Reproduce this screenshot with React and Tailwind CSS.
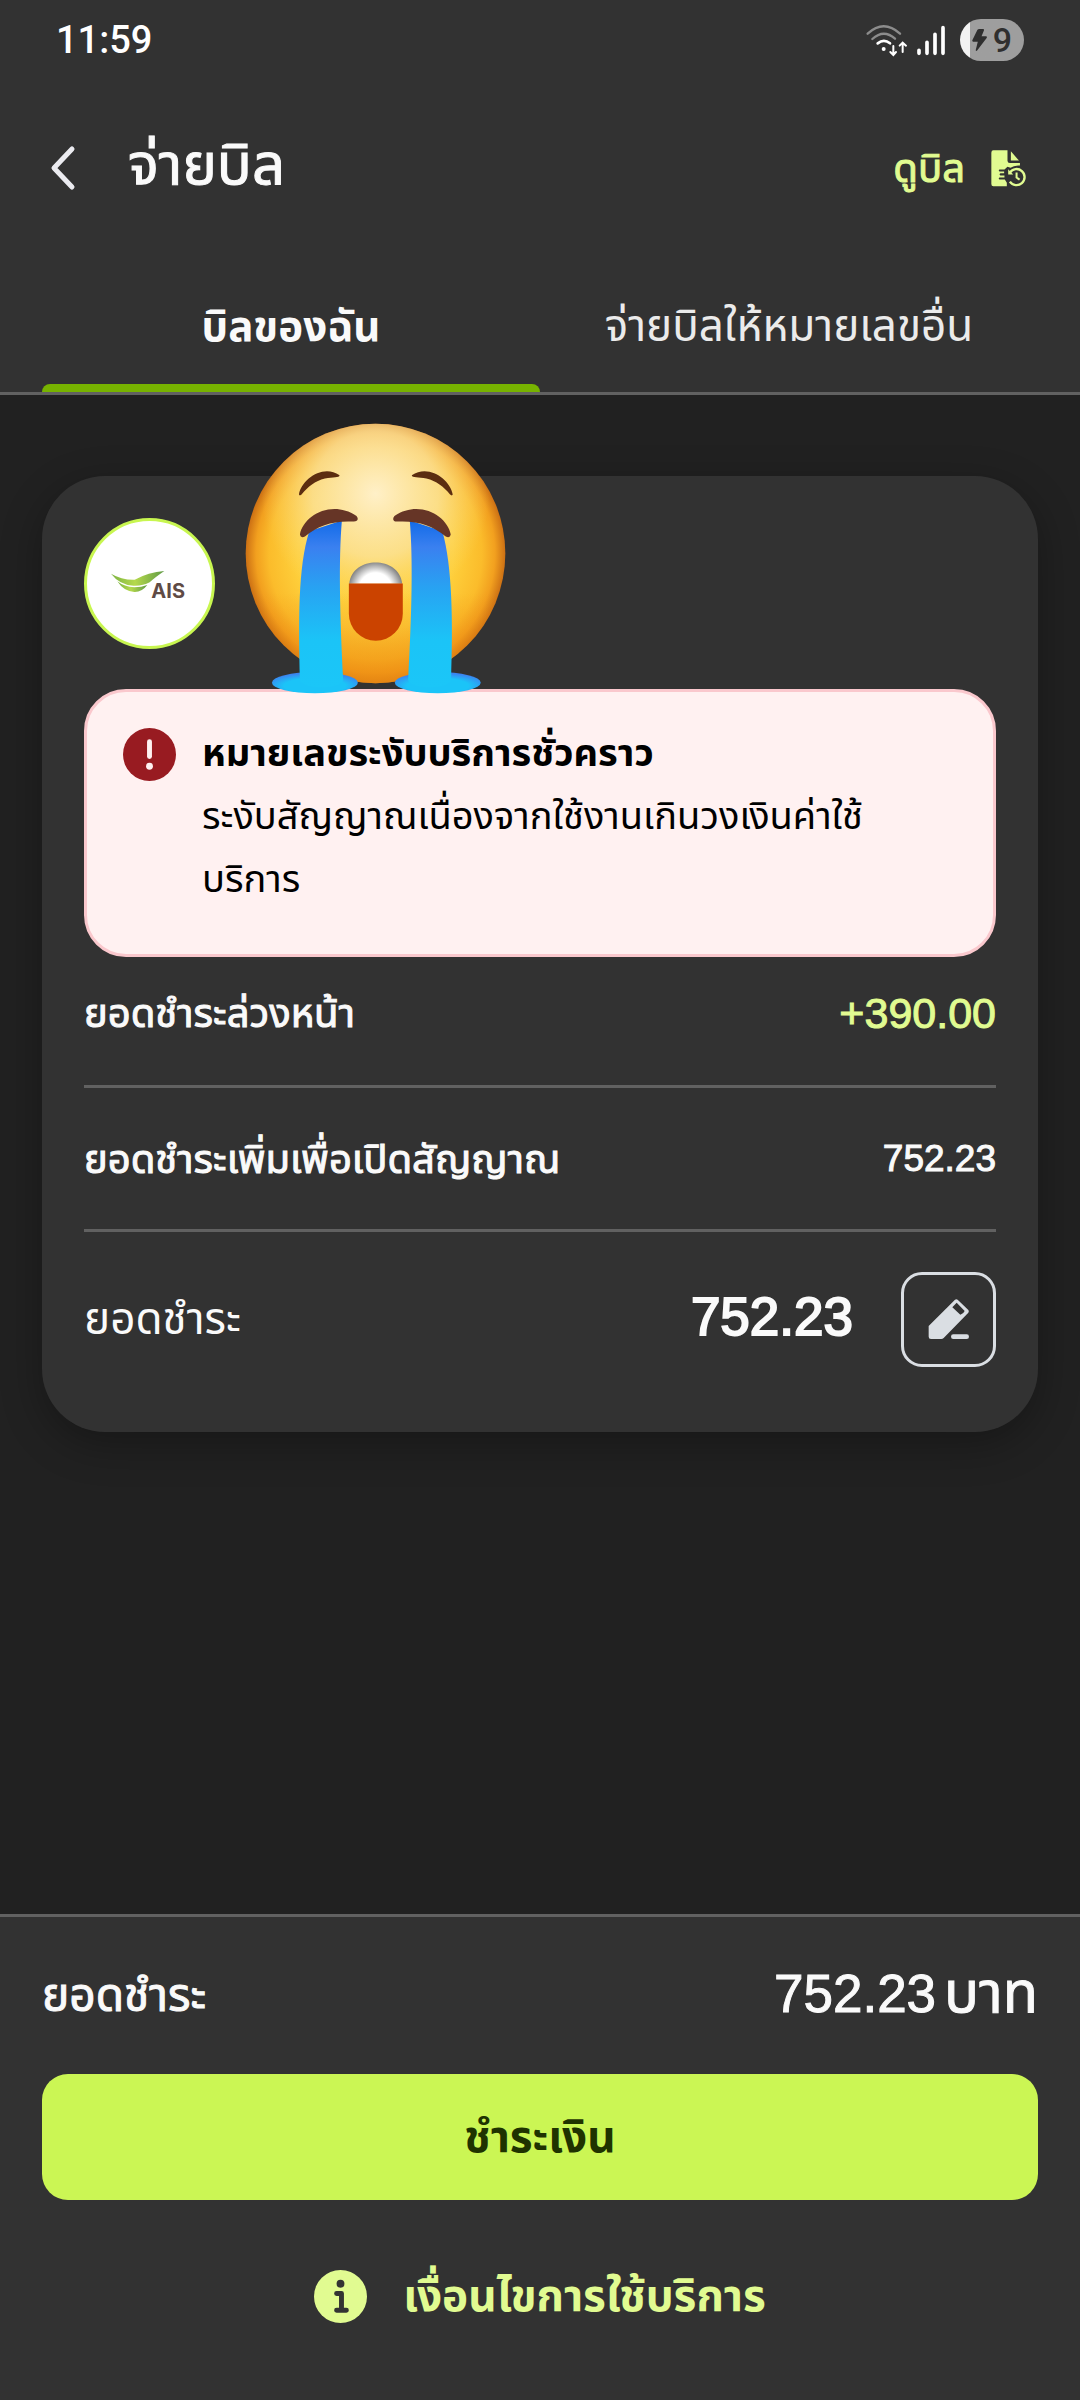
import React, { useState } from 'react';

const TABS = [
  { id: 'mine', label: 'บิลของฉัน' },
  { id: 'other', label: 'จ่ายบิลให้หมายเลขอื่น' },
];

function SignalIcons() {
  return (
    <svg viewBox="78 60 240 120" className="w-20 h-10" fill="none" strokeLinecap="round" aria-hidden="true">
      <g stroke="#8c8c8c" strokeWidth="7">
        <path d="M83 101 Q131 57 180 101" />
        <path d="M97 117 Q131 86 165 116" />
      </g>
      <g stroke="#fff" strokeWidth="8">
        <path d="M113 130 Q132 115 150 130" />
        <path d="M160 138 V163 M151 156 L160 165 L168 156" strokeWidth="6" />
        <path d="M188 156 V129 M179 137 L188 128 L198 137" strokeWidth="6" />
      </g>
      <circle cx="131" cy="147" r="6" fill="#fff" />
      <g stroke="#fff" strokeWidth="11">
        <path d="M237 151 V160 M261 127 V160 M285 103 V160 M309 83 V160" />
      </g>
    </svg>
  );
}

function Battery({ level }) {
  return (
    <div className="flex items-center justify-end gap-1.5 w-16 h-[42px] pr-3 rounded-full bg-linear-to-r from-[#f2f2f2] from-15% to-[#9e9e9e] to-15% text-[#2f2f2f]">
      <svg viewBox="392 88 44 68" className="w-[15px] h-6" fill="currentColor" aria-hidden="true">
        <path d="M408 92 Q410 90 413 90 H425 Q428 91 427 94 L420 111 H434 Q437 113 435 116 L407 153 Q403 156 403 151 L409 127 H395 Q392 126 393 123 Z" />
      </svg>
      <span className="font-[Roboto] font-medium text-[34px] leading-[42px]">{level}</span>
    </div>
  );
}

function StatusBar() {
  return (
    <div className="flex items-center justify-between h-20 px-14">
      <span className="font-[Roboto] font-medium text-[38px] leading-10 text-white">11:59</span>
      <div className="flex items-center gap-3.5">
        <SignalIcons />
        <Battery level={9} />
      </div>
    </div>
  );
}

function BillHistoryIcon() {
  return (
    <svg viewBox="456 449 104 110" className="w-[35px] h-[37px]" aria-hidden="true">
      <path d="M463 450 H505 V481 Q505 488 512 488 H542 V495 Q525 494 514 502 L505 499 L496 507 H481 Q477 509 481 513 H495 V518 H484 Q479 520 484 525 H496 V531 H481 Q477 534 481 537 H497 L503 546 V557 H463 Q457 557 457 550 V457 Q457 450 463 450 Z" fill="#e1fb91" />
      <path d="M515 453 L539 480 H515 Z" fill="#e1fb91" />
      <path d="M512 516 A24 24 0 1 1 512 543" fill="none" stroke="#e1fb91" strokeWidth="7" />
      <path d="M507 506 V522 H522 Z" fill="#e1fb91" />
      <path d="M532 516 V531 L541 537" fill="none" stroke="#e1fb91" strokeWidth="6" />
    </svg>
  );
}

function AisLogo() {
  return (
    <div className="flex items-center justify-center w-[131px] h-[131px] rounded-full border-[3px] border-[#c8f650] bg-white">
      <svg viewBox="215 475 240 150" className="w-20 h-[50px]" role="img" aria-label="AIS">
        <defs>
          <linearGradient id="leaf" x1="0" y1="0" x2="1" y2="0">
            <stop offset="0" stopColor="#7cb342" />
            <stop offset="0.45" stopColor="#b5d94c" />
            <stop offset="1" stopColor="#5f9a45" />
          </linearGradient>
        </defs>
        <path d="M218 519 Q250 538 289 537 Q330 515 378 511 Q350 530 334 545 Q314 556 286 555 Q244 553 218 519 Z" fill="url(#leaf)" />
        <path d="M237 542 Q258 559 288 560 Q310 560 327 553 Q310 575 288 574 Q256 572 237 542 Z" fill="url(#leaf)" />
        <text x="339" y="591" fontFamily="Inter, sans-serif" fontWeight="700" fontSize="60" fill="#5f4b45">AIS</text>
      </svg>
    </div>
  );
}

function CryingFace() {
  return (
    <svg viewBox="612 64 790 820" className="absolute left-[202px] -top-[54px] w-[263px] h-[273px]" role="img" aria-label="ร้องไห้">
      <defs>
        <radialGradient id="face" cx="0.5" cy="0.5" r="0.5">
          <stop offset="0" stopColor="#ffd540" />
          <stop offset="0.6" stopColor="#fed03c" />
          <stop offset="0.82" stopColor="#fbbc2b" />
          <stop offset="0.92" stopColor="#f2a01f" />
          <stop offset="1" stopColor="#cc7014" />
        </radialGradient>
        <radialGradient id="shine" cx="0.5" cy="0.27" r="0.44">
          <stop offset="0" stopColor="#fff0c8" />
          <stop offset="0.55" stopColor="#fbe3a0" stopOpacity="0.75" />
          <stop offset="1" stopColor="#fbd870" stopOpacity="0" />
        </radialGradient>
        <linearGradient id="chin" x1="0" y1="0" x2="0" y2="1">
          <stop offset="0.65" stopColor="#f09010" stopOpacity="0" />
          <stop offset="1" stopColor="#ee8d12" stopOpacity="0.75" />
        </linearGradient>
        <linearGradient id="tear" x1="0" y1="0" x2="0" y2="1">
          <stop offset="0" stopColor="#126be8" />
          <stop offset="0.16" stopColor="#3a80f0" />
          <stop offset="0.4" stopColor="#28a2f2" />
          <stop offset="0.72" stopColor="#1bc4f7" />
          <stop offset="1" stopColor="#1bc6f8" />
        </linearGradient>
        <radialGradient id="puddle" cx="0.5" cy="0.65" r="0.6">
          <stop offset="0.6" stopColor="#1bc4f8" />
          <stop offset="1" stopColor="#3b84f0" />
        </radialGradient>
        <radialGradient id="teeth" gradientUnits="userSpaceOnUse" cx="1007" cy="566" r="82">
          <stop offset="0.6" stopColor="#fff" />
          <stop offset="1" stopColor="#858585" />
        </radialGradient>
      </defs>
      <circle cx="1007" cy="459" r="390" fill="url(#face)" />
      <circle cx="1007" cy="459" r="390" fill="url(#shine)" />
      <circle cx="1007" cy="459" r="390" fill="url(#chin)" />
      <g fill="#5c2d10">
        <path d="M777 282 C785 235 850 190 899 224 C898 233 880 228 855 234 C825 242 805 258 785 282 Q779 287 777 282 Z" />
        <path d="M1239 282 C1231 235 1166 190 1116 224 C1117 233 1136 228 1160 234 C1190 242 1211 258 1231 282 Q1237 287 1239 282 Z" />
      </g>
      <path d="M928 550 C936 465 1079 465 1087 550 Z" fill="url(#teeth)" />
      <path d="M927 549 H1089 V640 A81 81 0 0 1 927 640 Z" fill="#cb4300" />
      <ellipse cx="825" cy="847" rx="129" ry="32" fill="url(#puddle)" />
      <ellipse cx="1194" cy="847" rx="129" ry="32" fill="url(#puddle)" />
      <path d="M808 392 L906 360 C896 480 900 640 910 840 C900 868 790 868 780 840 C776 660 774 500 808 392 Z" fill="url(#tear)" />
      <path d="M1208 392 L1110 360 C1120 480 1116 640 1105 840 C1116 868 1224 868 1234 840 C1240 660 1238 500 1208 392 Z" fill="url(#tear)" />
      <g fill="#663526">
        <path d="M780 402 C790 345 875 296 950 346 C958 356 952 364 940 363 C880 360 835 374 795 408 Q782 414 780 402 Z" />
        <path d="M1233 402 C1223 345 1138 296 1064 346 C1056 356 1061 364 1073 363 C1133 360 1178 374 1218 408 Q1231 414 1233 402 Z" />
      </g>
    </svg>
  );
}

function AlertIcon() {
  return (
    <svg viewBox="0 0 54 54" className="mt-1.5 w-[53px] h-[53px] shrink-0" aria-hidden="true">
      <circle cx="27" cy="27" r="27" fill="#981b21" />
      <path d="M27 14 V29" stroke="#fff1f1" strokeWidth="5" strokeLinecap="round" />
      <circle cx="27" cy="39" r="3.5" fill="#fff1f1" />
    </svg>
  );
}

function EditIcon() {
  return (
    <svg viewBox="864 648 126 126" className="w-[42px] h-[42px]" aria-hidden="true">
      <path d="M866 732 L945 653 Q949 650 953 653 L985 684 Q988 688 985 692 L911 768 Q908 771 904 771 H873 Q866 771 866 764 Z M937 676 L961 698 Q971 695 974 687 L950 662 Z" fill="#dadee3" fillRule="evenodd" />
      <path d="M940 764 H980" stroke="#dadee3" strokeWidth="14" strokeLinecap="round" />
    </svg>
  );
}

function InfoIcon() {
  return (
    <svg viewBox="0 0 54 54" className="w-[53px] h-[53px]" aria-hidden="true">
      <circle cx="27" cy="27" r="27" fill="#e1fb91" />
      <circle cx="27" cy="14" r="4" fill="#333" />
      <path d="M23 24 H28 V41 M23 41 H33" fill="none" stroke="#333" strokeWidth="5" strokeLinecap="round" strokeLinejoin="round" />
    </svg>
  );
}

export default function App() {
  const [tab, setTab] = useState('mine');

  return (
    <div className="min-h-screen flex flex-col bg-[#212121] text-[#fafafa] font-['Liberation_Sans','Noto_Sans_Thai',sans-serif]">
      <header className="bg-[#323232] border-b-[3px] border-[#616161]">
        <StatusBar />
        <div className="flex items-center h-44 pl-12 pr-[54px]">
          <button aria-label="ย้อนกลับ" className="w-8 h-12">
            <svg viewBox="0 0 32 48" className="w-8 h-12" fill="none" stroke="#ebebf0" strokeWidth="5" strokeLinecap="round" strokeLinejoin="round">
              <path d="M24 5 L6 24 L24 43" />
            </svg>
          </button>
          <h1 className="ml-12 pb-2 text-[58px] leading-[72px] [-webkit-text-stroke:1px_currentColor]">จ่ายบิล</h1>
          <button className="ml-auto flex items-center gap-[26px] text-[40px] leading-[60px] text-[#e1fb91] [-webkit-text-stroke:1px_currentColor]">
            ดูบิล
            <BillHistoryIcon />
          </button>
        </div>

        {/* Tabs */}
        <div role="tablist" className="grid grid-cols-2 px-[42px]">
          {TABS.map((t) => (
            <div key={t.id} role="presentation" className="flex flex-col">
              <button
                role="tab"
                aria-selected={tab === t.id}
                onClick={() => setTab(t.id)}
                className={`h-32 pt-3 ${tab === t.id ? 'text-[42px] font-bold' : 'text-[44px] text-[#ebebeb]'}`}
              >
                {t.label}
              </button>
              <div className={`h-2 rounded-t-lg ${tab === t.id ? 'bg-[#77b300]' : 'bg-transparent'}`} />
            </div>
          ))}
        </div>
      </header>

      <main className="flex-1 px-[42px] pt-[81px] pb-12">
        <section className="relative rounded-[63px] bg-[#323232] p-[42px] pb-[26px] shadow-[0_12px_42px_rgba(0,0,0,0.3)]">
          <AisLogo />
          <div className="mt-10 flex gap-[26px] rounded-[42px] border-[3px] border-[#fac8cd] bg-[#fff1f1] pt-[30px] pb-[43px] pl-9 pr-24 text-[38px] leading-[63px] text-black">
            <AlertIcon />
            <div>
              <h2 className="font-bold">หมายเลขระงับบริการชั่วคราว</h2>
              <p>ระงับสัญญาณเนื่องจากใช้งานเกินวงเงินค่าใช้บริการ</p>
            </div>
          </div>
          <CryingFace />

          <dl className="text-[40px]">
            <div className="flex items-center justify-between h-[131px] pb-4 border-b-[3px] border-[#616161] [-webkit-text-stroke:1px_currentColor]">
              <dt>ยอดชำระล่วงหน้า</dt>
              <dd className="text-[43px] text-[#e1fb91]">+390.00</dd>
            </div>
            <div className="flex items-center justify-between h-36 border-b-[3px] border-[#616161] [-webkit-text-stroke:1px_currentColor]">
              <dt>ยอดชำระเพิ่มเพื่อเปิดสัญญาณ</dt>
              <dd className="text-[37px]">752.23</dd>
            </div>
            <div className="flex items-center h-[174px]">
              <dt className="text-[44px]">ยอดชำระ</dt>
              <dd className="ml-auto pb-1 text-[53px] [-webkit-text-stroke:2px_currentColor]">752.23</dd>
              <dd className="ml-12">
                <button aria-label="แก้ไขยอดชำระ" className="flex items-center justify-center w-[95px] h-[95px] rounded-[21px] border-[3px] border-[#dadee3]">
                  <EditIcon />
                </button>
              </dd>
            </div>
          </dl>
        </section>
      </main>

      <footer className="bg-[#323232] border-t-[3px] border-[#616161] px-[42px] pb-[68px]">
        <div className="flex items-center justify-between h-[157px] [-webkit-text-stroke:1px_currentColor]">
          <span className="text-[46px]">ยอดชำระ</span>
          <span className="flex items-baseline gap-2 pb-2">
            <span className="text-[53px]">752.23</span>
            <span className="text-[58px]">บาท</span>
          </span>
        </div>
        <button className="w-full h-[126px] rounded-[26px] bg-[#cbf654] text-[44px] font-bold text-[#1f3300]">ชำระเงิน</button>
        <a href="#terms" className="mt-[60px] flex items-center justify-center gap-9 h-[72px] text-[44px] font-bold text-[#e1fb91]">
          <InfoIcon />
          เงื่อนไขการใช้บริการ
        </a>
      </footer>
    </div>
  );
}
